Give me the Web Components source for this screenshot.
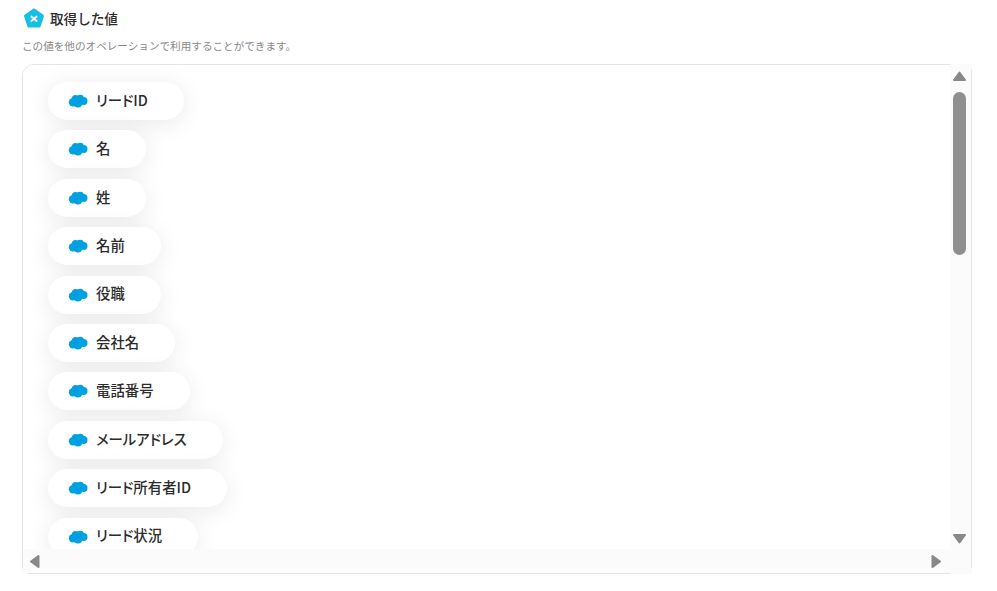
<!DOCTYPE html>
<html lang="ja">
<head>
<meta charset="UTF-8">
<title>取得した値</title>
<style>
  html, body { margin: 0; background: #fff; }
  body { font-family: "Noto Sans CJK JP", "Noto Sans", sans-serif; color: #2b2b2b; }
</style>
</head>
<body>
<output-values heading="取得した値" note="この値を他のオペレーションで利用することができます。">
  <value-pill>リードID</value-pill>
  <value-pill>名</value-pill>
  <value-pill>姓</value-pill>
  <value-pill>名前</value-pill>
  <value-pill>役職</value-pill>
  <value-pill>会社名</value-pill>
  <value-pill>電話番号</value-pill>
  <value-pill>メールアドレス</value-pill>
  <value-pill>リード所有者ID</value-pill>
  <value-pill>リード状況</value-pill>
</output-values>

<script>
  class ValuePill extends HTMLElement {
    constructor() {
      super();
      const shadow = this.attachShadow({ mode: 'open' });
      shadow.innerHTML = `
        <style>
          :host {
            display: flex;
            align-items: center;
            width: fit-content;
            height: 38px;
            flex: none;
            padding: 0 36px 0 20px;
            border-radius: 19px;
            background: #fff;
            box-shadow: 0 4px 24px rgba(0, 0, 0, .09);
            font-size: 14.4px;
            font-weight: 500;
            font-feature-settings: "palt";
            line-height: 1;
            color: #2b2b2b;
          }
          svg { width: 20px; height: 14px; margin: 0 8px 0 0; flex: none; }
          span { position: relative; top: -1px; }
        </style>
        <svg viewBox="0 0 20 14" fill="#00a1e0">
          <circle cx="5" cy="8.2" r="4.2"/>
          <circle cx="7.5" cy="4.6" r="3.6"/>
          <circle cx="12.2" cy="4.6" r="3.8"/>
          <circle cx="15.6" cy="7" r="3.9"/>
          <circle cx="10" cy="9.4" r="4.1"/>
        </svg>
        <span><slot></slot></span>
      `;
    }
  }

  class ArrowButton extends HTMLElement {
    static get observedAttributes() {
      return ['dir'];
    }

    constructor() {
      super();
      const shadow = this.attachShadow({ mode: 'open' });
      shadow.innerHTML = `
        <style>
          :host { display: block; flex: none; width: 15px; height: 15px; }
          svg { display: block; width: 100%; height: 100%; }
        </style>
        <svg viewBox="0 0 15 15"><path fill="#888" stroke="#888" stroke-width="2" stroke-linejoin="round"></path></svg>
      `;
      this.path = shadow.querySelector('path');
    }

    attributeChangedCallback(name, oldValue, newValue) {
      const shapes = {
        up: 'M7.5 3.5 L13 11 H2 Z',
        down: 'M2 4 H13 L7.500 11.5 Z',
        left: 'M11.5 2 V13 L4 7.5 Z',
        right: 'M3.500 2 V13 L11 7.500 Z'
      };
      this.path.setAttribute('d', shapes[newValue]);
    }
  }

  class ScrollFrame extends HTMLElement {
    constructor() {
      super();
      const shadow = this.attachShadow({ mode: 'open' });
      shadow.innerHTML = `
        <style>
          :host {
            display: grid;
            grid-template-columns: minmax(0, 1fr) 21px;
            grid-template-rows: minmax(0, 1fr) 24px;
            box-sizing: border-box;
            height: 510px;
            margin: 0 25px 0 22px;
            border: 1px solid #e4e4e4;
            border-radius: 12px;
          }
          .view {
            grid-column: 1;
            grid-row: 1;
            display: flex;
            flex-direction: column;
            gap: 10.4px;
            padding: 17px 25px;
            overflow: hidden;
            border-top-left-radius: 11px;
            background: #fff;
          }
          /* tracks sit on top of the rounded corners, like a native scrollbar */
          .vbar {
            grid-column: 2;
            grid-row: 1 / 3;
            display: flex;
            flex-direction: column;
            align-items: center;
            margin: -1px -1px -1px 0;
            padding: 5px 3px 0 0;
            background:
              linear-gradient(#e4e4e4, #e4e4e4) right center / 1px calc(100% - 12px) no-repeat,
              #fbfbfb;
          }
          .thumb {
            width: 13px;
            height: 163px;
            margin: 8px 0 276px;
            border-radius: 7px;
            background: #8f8f8f;
          }
          .hbar {
            grid-column: 1;
            grid-row: 2;
            display: flex;
            justify-content: space-between;
            align-items: center;
            margin: 0 0 -1px -1px;
            padding: 0 6px 0 5px;
            background:
              linear-gradient(#e4e4e4, #e4e4e4) 6px bottom / 100% 1px no-repeat,
              linear-gradient(#e4e4e4, #e4e4e4) left top / 1px calc(100% - 6px) no-repeat,
              #fbfbfb;
          }
        </style>
        <div class="view"><slot></slot></div>
        <div class="vbar">
          <arrow-button dir="up"></arrow-button>
          <div class="thumb"></div>
          <arrow-button dir="down"></arrow-button>
        </div>
        <div class="hbar">
          <arrow-button dir="left"></arrow-button>
          <arrow-button dir="right"></arrow-button>
        </div>
      `;
    }
  }

  class OutputValues extends HTMLElement {
    constructor() {
      super();
      const shadow = this.attachShadow({ mode: 'open' });
      shadow.innerHTML = `
        <style>
          :host { display: block; padding-top: 8px; }
          header {
            display: flex;
            align-items: center;
            gap: 5px;
            height: 20px;
            padding-left: 23px;
          }
          header svg { width: 22px; height: 22px; flex: none; }
          h2 { margin: 0; font-size: 13.6px; font-weight: 500; line-height: 20px; color: #2b2b2b; }
          p {
            margin: 11px 0 11px 22px;
            font-size: 10.6px;
            line-height: 14px;
            color: #888;
          }
        </style>
        <header>
          <svg viewBox="0 0 22 22">
            <path fill="#17bfe8" stroke="#17bfe8" stroke-width="3" stroke-linejoin="round" d="M11 3 L19.500 9 L16.200 19 H5.800 L2.500 9 Z"/>
            <path fill="none" stroke="#fff" stroke-width="1.7" stroke-linecap="round" d="M8.300 9.500 L13.700 14 M13.700 9.500 L8.300 14"/>
          </svg>
          <h2></h2>
        </header>
        <p></p>
        <scroll-frame><slot></slot></scroll-frame>
      `;
      shadow.querySelector('h2').textContent = this.getAttribute('heading');
      shadow.querySelector('p').textContent = this.getAttribute('note');
    }
  }

  customElements.define('value-pill', ValuePill);
  customElements.define('arrow-button', ArrowButton);
  customElements.define('scroll-frame', ScrollFrame);
  customElements.define('output-values', OutputValues);
</script>
</body>
</html>
